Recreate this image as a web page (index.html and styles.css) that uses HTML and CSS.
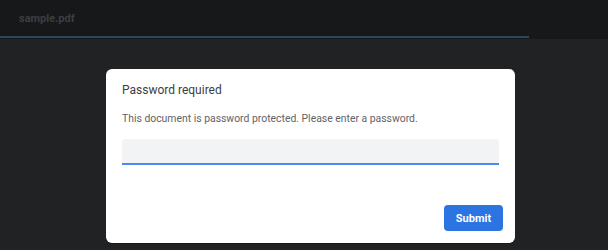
FILE: index.html
```html
<!DOCTYPE html>
<html>
<head>
<meta charset="utf-8">
<link rel="stylesheet" href="styles.css">
</head>
<body>
<header class="topbar">
  <div class="title">sample.pdf</div>
  <div class="progress"></div>
</header>
<main class="viewer">
  <div class="dialog">
    <div class="dialog-title">Password required</div>
    <div class="dialog-body">This document is password protected. Please enter a password.</div>
    <div class="field"></div>
    <div class="actions"><button class="submit">Submit</button></div>
  </div>
</main>
</body>
</html>
```
FILE: styles.css
```css
html, body {
  margin: 0;
  padding: 0;
  height: 100%;
}
body {
  background: #212224;
  font-family: Roboto, "Liberation Sans", sans-serif;
  overflow: hidden;
}
.topbar {
  background: #17181a;
  height: 39px;
  display: flex;
  flex-direction: column;
}
.title {
  height: 36px;
  display: flex;
  align-items: center;
  padding-left: 19px;
  font-size: 11px;
  font-weight: 700;
  color: #3d3e41;
}
.progress {
  width: 529px;
  height: 2px;
  background: #2f4461;
}
.viewer {
  padding: 30px 0 0 106px;
}
.dialog {
  width: 409px;
  height: 174px;
  box-sizing: border-box;
  background: #ffffff;
  border-radius: 6px;
  padding: 14px 16px 12px 16px;
  display: flex;
  flex-direction: column;
  box-shadow: 0 1px 1px rgba(0,0,0,0.3);
}
.dialog-title {
  font-size: 12px;
  line-height: 15px;
  color: #3c4043;
}
.dialog-body {
  margin-top: 14px;
  font-size: 10.4px;
  line-height: 13px;
  color: #5f6368;
}
.field {
  margin-top: 14px;
  height: 24px;
  background: #f1f3f4;
  border-bottom: 2px solid #4a8af0;
  border-radius: 3px 3px 0 0;
}
.actions {
  margin-top: auto;
  display: flex;
  justify-content: flex-end;
  margin-right: -4px;
}
.submit {
  width: 59px;
  height: 26px;
  border: none;
  border-radius: 4px;
  background: #2b74e2;
  color: #ffffff;
  font-family: Roboto, "Liberation Sans", sans-serif;
  font-size: 11px;
  font-weight: 700;
  padding: 0;
}
```
